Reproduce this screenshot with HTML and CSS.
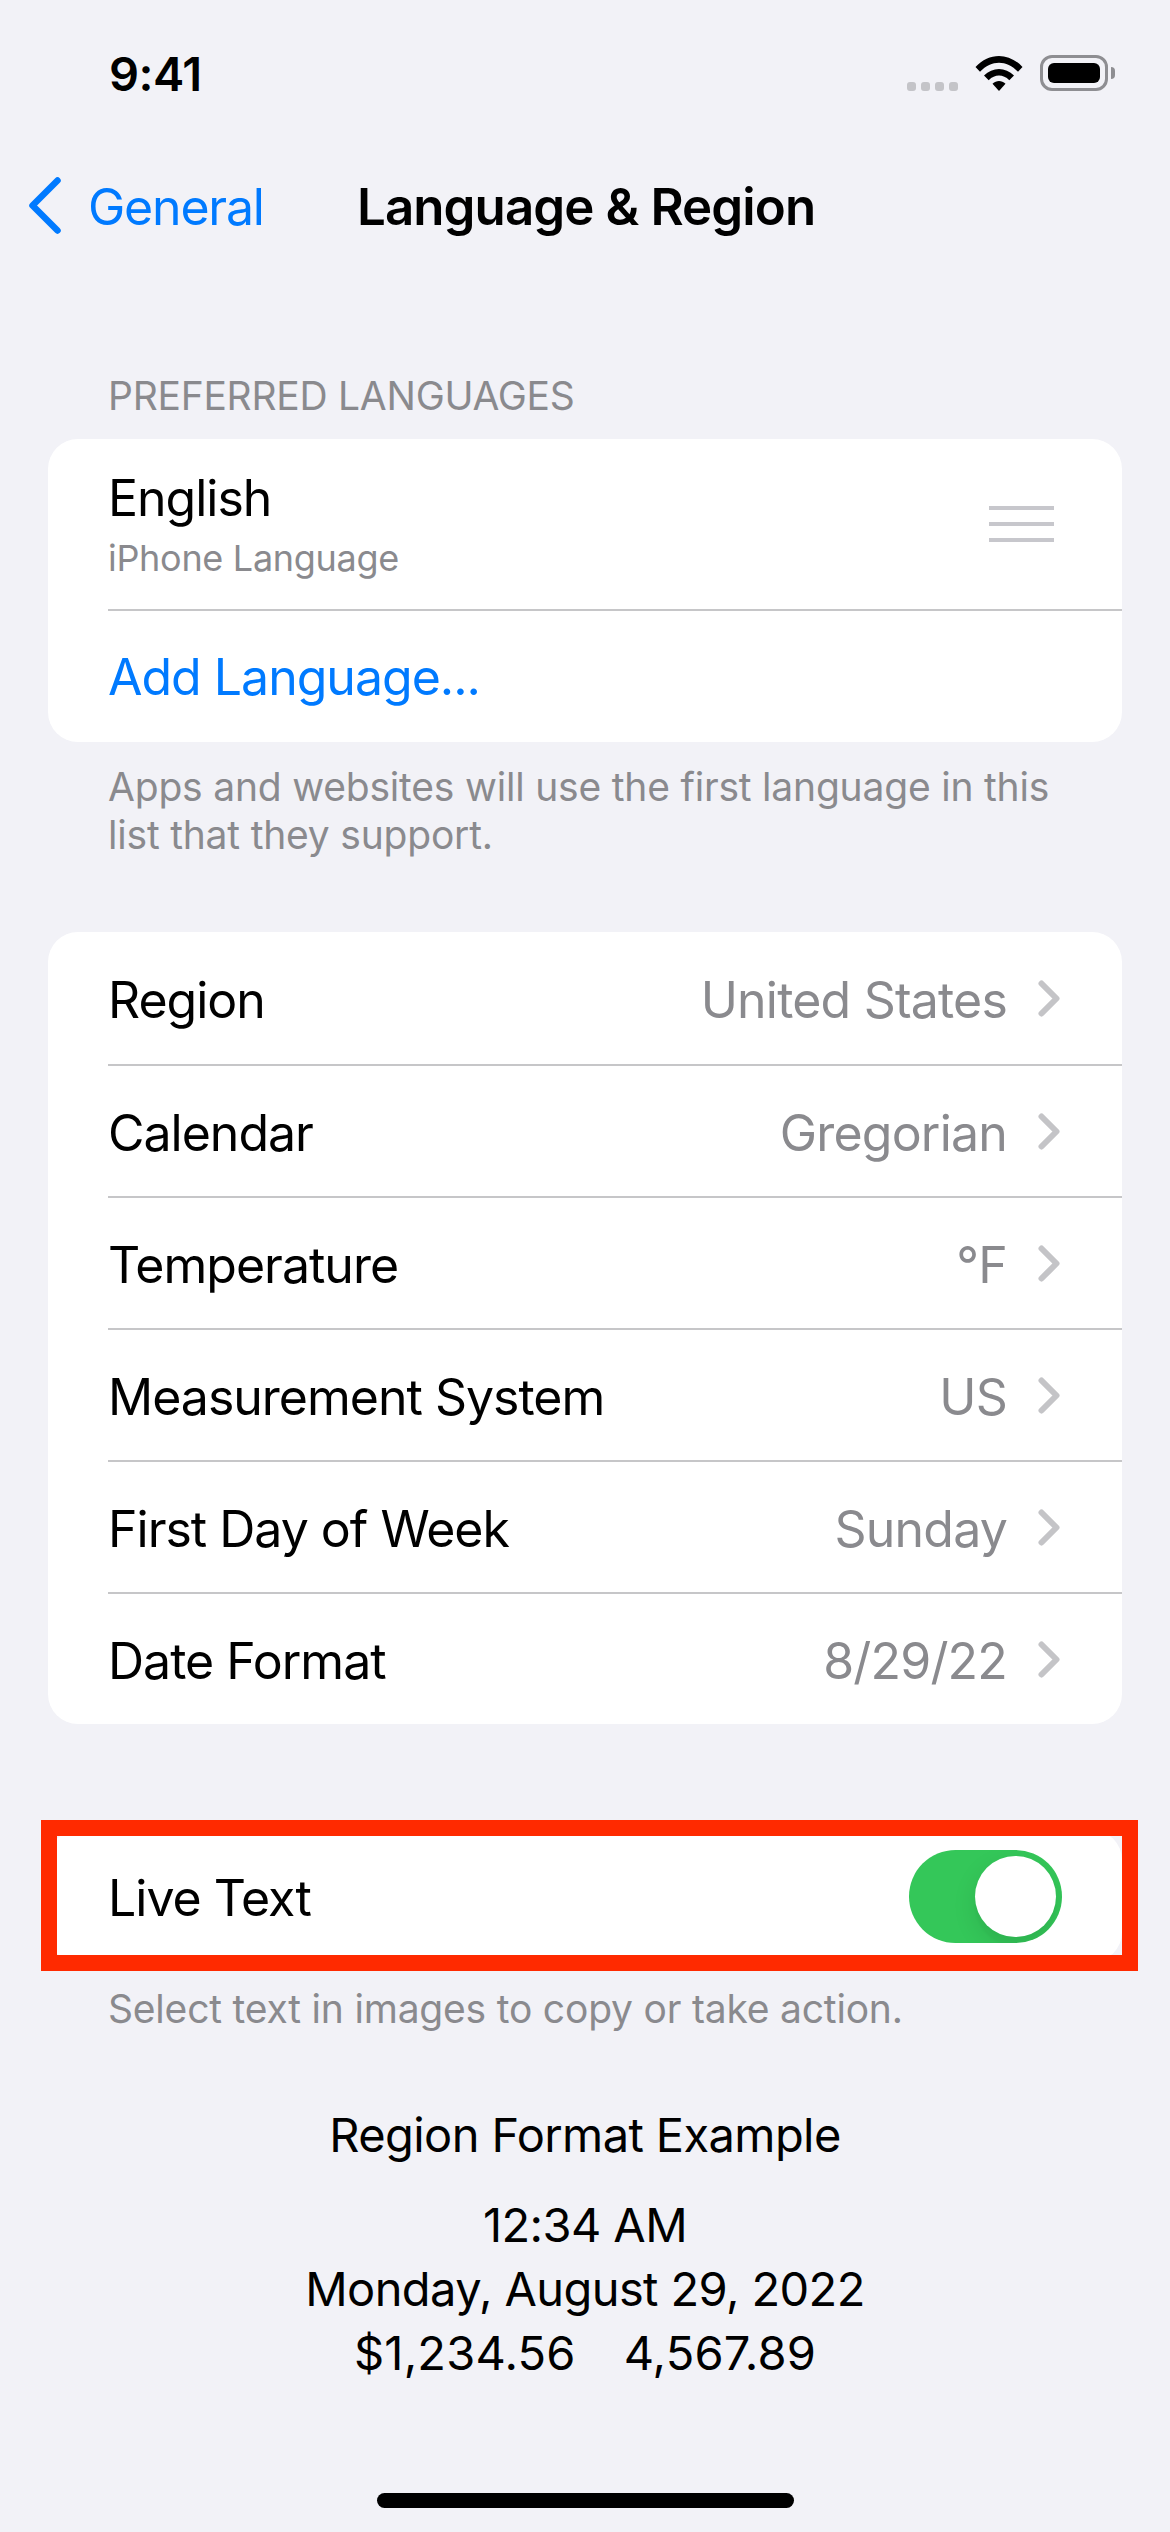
FILE: index.html
```html
<!DOCTYPE html>
<html lang="en">
<head>
    <meta charset="UTF-8">
    <meta name="viewport" content="width=device-width, initial-scale=1.0">
    <title>Language &amp; Region</title>
    <link rel="stylesheet" href="styles.css">
</head>
<body>
    <div class="page">
        <div class="status-bar">
            <span class="time">9:41</span>
            <div class="status-icons">
                <div class="signal"><i></i><i></i><i></i><i></i></div>
                <svg class="wifi" viewBox="0 0 48 36" width="48" height="36">
                    <path d="M0.5 12 C14 -2.8 34 -2.8 47.5 12 L43 16.8 C31.500 4.800 16.500 4.800 5 16.800 Z"/>
                    <path d="M9 20.500 C17.500 11.700 30.500 11.700 39 20.500 L34.300 25.200 C28 19 20 19 13.700 25.200 Z"/>
                    <path d="M17.500 28.800 C21.500 25.200 26.500 25.200 30.500 28.800 L24 36 Z"/>
                </svg>
                <div class="battery"><div class="battery-fill"></div></div>
                <div class="battery-cap"></div>
            </div>
        </div>

        <nav class="nav">
            <svg class="back" viewBox="0 0 33 57" width="33" height="57">
                <path d="M29.500 3.500 L4.500 28.500 L29.500 53.500" fill="none" stroke="#007aff" stroke-width="6.500" stroke-linecap="round" stroke-linejoin="round"/>
            </svg>
            <span class="back-label">General</span>
            <span class="nav-title">Language &amp; Region</span>
        </nav>

        <div class="section-header">PREFERRED LANGUAGES</div>
        <div class="card">
            <div class="row row-language">
                <div>
                    <div class="row-label">English</div>
                    <div class="row-sub">iPhone Language</div>
                </div>
                <div class="handle"><i></i><i></i><i></i></div>
            </div>
            <div class="row row-add">
                <span class="row-label link">Add Language...</span>
            </div>
        </div>
        <p class="footnote footnote-languages">Apps and websites will use the first language in this list that they support.</p>

        <div class="card card-settings">
            <div class="row">
                <span class="row-label">Region</span>
                <span class="row-value">United States</span>
                <svg class="chevron" viewBox="0 0 22 37" width="22" height="37"><path d="M3.500 3.500 L18.500 18.500 L3.500 33.500"/></svg>
            </div>
            <div class="row">
                <span class="row-label">Calendar</span>
                <span class="row-value">Gregorian</span>
                <svg class="chevron" viewBox="0 0 22 37" width="22" height="37"><path d="M3.500 3.500 L18.500 18.500 L3.500 33.500"/></svg>
            </div>
            <div class="row">
                <span class="row-label">Temperature</span>
                <span class="row-value">°F</span>
                <svg class="chevron" viewBox="0 0 22 37" width="22" height="37"><path d="M3.500 3.500 L18.500 18.500 L3.500 33.500"/></svg>
            </div>
            <div class="row">
                <span class="row-label">Measurement System</span>
                <span class="row-value">US</span>
                <svg class="chevron" viewBox="0 0 22 37" width="22" height="37"><path d="M3.500 3.500 L18.500 18.500 L3.500 33.500"/></svg>
            </div>
            <div class="row">
                <span class="row-label">First Day of Week</span>
                <span class="row-value">Sunday</span>
                <svg class="chevron" viewBox="0 0 22 37" width="22" height="37"><path d="M3.500 3.500 L18.500 18.500 L3.500 33.500"/></svg>
            </div>
            <div class="row">
                <span class="row-label">Date Format</span>
                <span class="row-value">8/29/22</span>
                <svg class="chevron" viewBox="0 0 22 37" width="22" height="37"><path d="M3.500 3.500 L18.500 18.500 L3.500 33.500"/></svg>
            </div>
        </div>

        <div class="card card-live">
            <div class="row">
                <span class="row-label">Live Text</span>
                <div class="toggle"><div class="knob"></div></div>
            </div>
            <div class="highlight"></div>
        </div>
        <p class="footnote footnote-live">Select text in images to copy or take action.</p>

        <div class="example">
            <div class="example-title">Region Format Example</div>
            <div class="example-lines">
                <div>12:34 AM</div>
                <div>Monday, August 29, 2022</div>
                <div class="example-numbers"><span>$1,234.56</span><span>4,567.89</span></div>
            </div>
        </div>

        <div class="home-indicator"></div>
    </div>
</body>
</html>
```

FILE: styles.css
```css
* {
    box-sizing: border-box;
}

body {
    margin: 0;
    background-color: #f2f2f7;
    color: #000;
    font-family: Inter, "Liberation Sans", sans-serif;
}

.page {
    height: 2532px;
    overflow: hidden;
    display: flex;
    flex-direction: column;
}

/* status bar */
.status-bar {
    height: 145px;
    padding: 48px 55px 0 109px;
    display: flex;
    justify-content: space-between;
    align-items: flex-start;
}

.time {
    font-size: 47px;
    line-height: 52px;
    font-weight: 600;
    letter-spacing: -0.5px;
}

.status-icons {
    display: flex;
    margin-top: 7px;
    height: 37px;
}

.signal {
    display: flex;
    gap: 5px;
    margin: 27px 17px 0 0;
}

.signal i {
    width: 9px;
    height: 9px;
    border-radius: 3px;
    background-color: #c4c4c8;
}

.wifi {
    margin-right: 17px;
}

.battery {
    width: 68px;
    height: 36px;
    padding: 5px;
    border: 3px solid #8e8e92;
    border-radius: 12px;
}

.battery-fill {
    height: 100%;
    background-color: #000;
    border-radius: 6px;
}

.battery-cap {
    width: 4px;
    height: 12px;
    margin: 12px 0 0 3px;
    background-color: #8e8e92;
    border-radius: 0 6px 6px 0;
}

/* nav */
.nav {
    height: 120px;
    padding-left: 28px;
    display: flex;
    align-items: center;
}

.back-label {
    margin-left: 27px;
    padding-top: 3px;
    width: 269px;
    font-size: 50px;
    color: #007aff;
    letter-spacing: -1.2px;
}

.nav-title {
    padding-top: 3px;
    font-size: 51px;
    font-weight: 600;
    letter-spacing: -0.9px;
}

/* sections */
.section-header {
    margin-top: 107px;
    padding-left: 108px;
    font-size: 39px;
    line-height: 47px;
    color: #8a8a8e;
    letter-spacing: -0.26px;
}

.card {
    margin: 20px 48px 0;
    background-color: #fff;
    border-radius: 30px;
}

.row {
    position: relative;
    height: 132px;
    margin-left: 60px;
    padding-right: 62px;
    display: flex;
    align-items: center;
}

.row + .row {
    border-top: 2px solid #c6c6c8;
}

.row-language {
    height: 170px;
    justify-content: space-between;
    padding-right: 68px;
}

.row-add {
    height: 133px;
}

.row-label {
    font-size: 50px;
    line-height: 60px;
    letter-spacing: -1px;
}

.link {
    color: #007aff;
}

.row-sub {
    margin-top: 8px;
    font-size: 36px;
    line-height: 44px;
    color: #8a8a8e;
    letter-spacing: -0.3px;
}

.handle {
    display: flex;
    flex-direction: column;
    gap: 12px;
}

.handle i {
    width: 65px;
    height: 4px;
    background-color: #c7c7cc;
}

.row-value {
    margin-left: auto;
    font-size: 50px;
    line-height: 60px;
    color: #8a8a8e;
    letter-spacing: -0.8px;
}

.card-settings .row-label,
.card-settings .row-value,
.card-live .row-label {
    padding-top: 3px;
}

.chevron {
    margin-left: 31px;
}

.chevron path {
    fill: none;
    stroke: #c4c4c7;
    stroke-width: 6;
    stroke-linecap: round;
    stroke-linejoin: round;
}

.footnote {
    margin: 0;
    padding: 0 100px 0 108px;
    font-size: 39px;
    line-height: 48px;
    color: #8a8a8e;
    letter-spacing: -0.2px;
}

.footnote-languages {
    margin-top: 21px;
}

.card-settings {
    margin-top: 73px;
}

.card-live {
    position: relative;
    margin-top: 106px;
}

/* red annotation box drawn over the row */
.highlight {
    position: absolute;
    top: -10px;
    right: -16px;
    bottom: -9px;
    left: -7px;
    border: 16px solid #ff2a00;
}

.card-live .row {
    padding-right: 60px;
    justify-content: space-between;
}

.toggle {
    width: 153px;
    height: 93px;
    padding: 6px;
    border-radius: 47px;
    background-color: #34c759;
    display: flex;
    justify-content: flex-end;
    overflow: hidden;
}

.knob {
    width: 81px;
    height: 81px;
    border-radius: 50%;
    background-color: #fff;
    box-shadow: 0 9px 24px rgba(0, 0, 0, 0.1), 0 9px 3px rgba(0, 0, 0, 0.02);
}

.footnote-live {
    margin-top: 23px;
}

/* region example */
.example {
    margin-top: 70px;
    text-align: center;
    font-size: 47px;
    line-height: 64px;
    letter-spacing: -0.6px;
}

.example-lines {
    margin-top: 26px;
}

.example-numbers {
    display: flex;
    justify-content: center;
    gap: 48px;
    letter-spacing: 0.2px;
}

.home-indicator {
    width: 417px;
    height: 15px;
    margin: auto auto 24px;
    border-radius: 8px;
    background-color: #000;
}
```
